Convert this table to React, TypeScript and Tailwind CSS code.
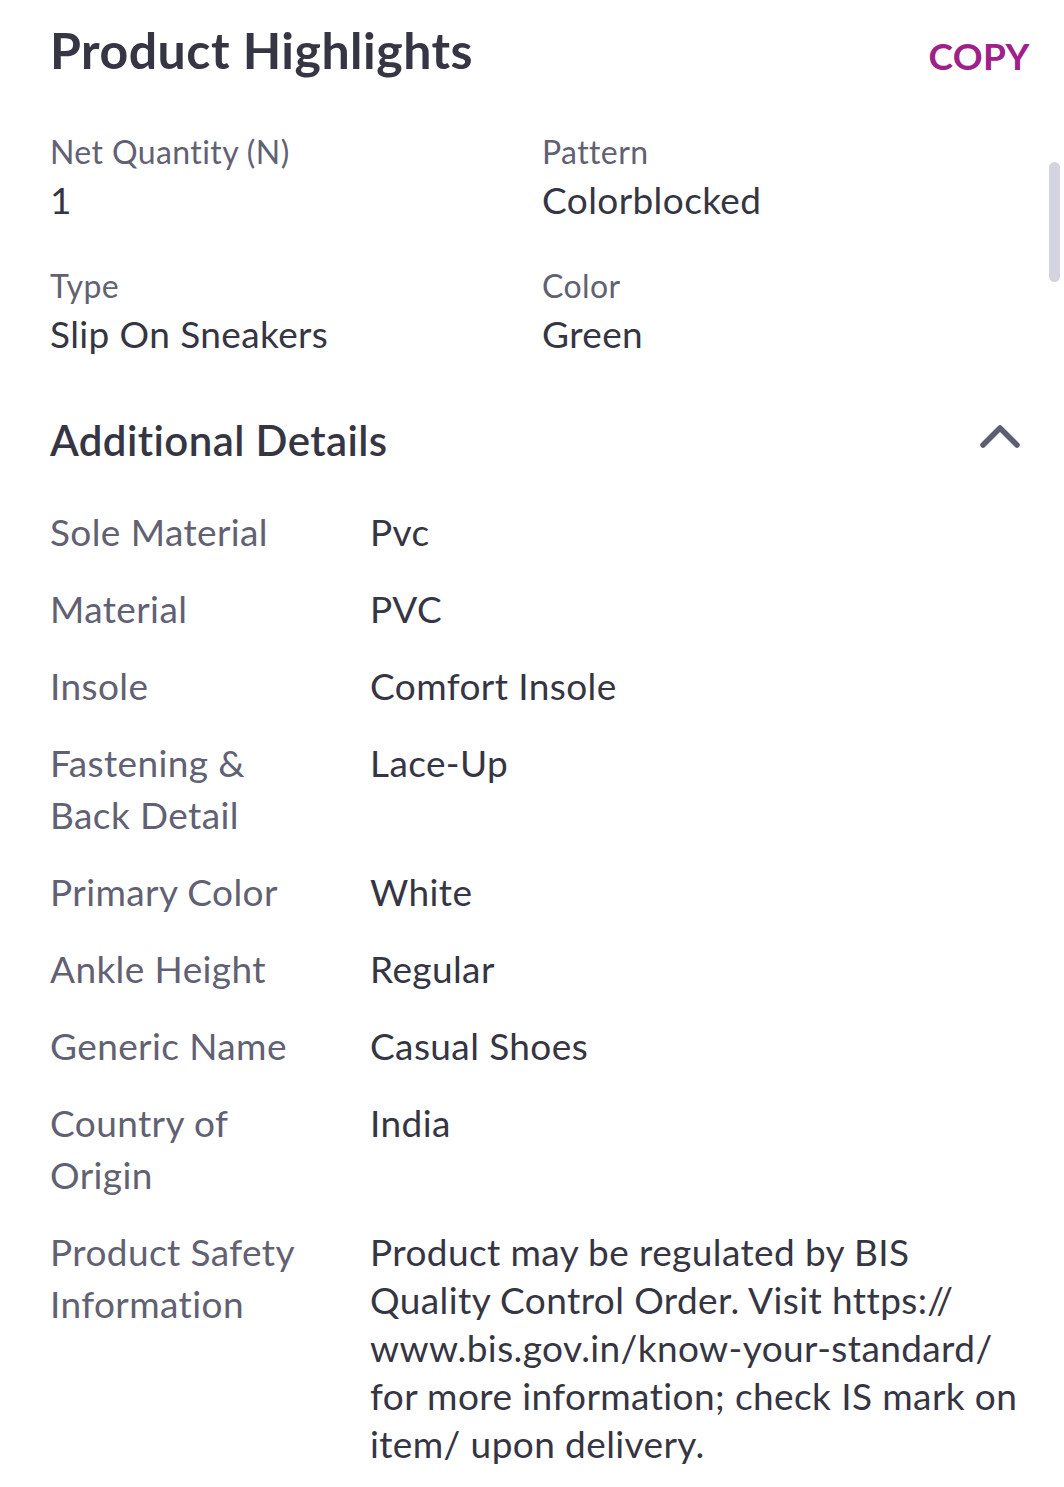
const highlights = [
  { label: "Net Quantity (N)", value: "1" },
  { label: "Pattern", value: "Colorblocked" },
  { label: "Type", value: "Slip On Sneakers" },
  { label: "Color", value: "Green" },
];

const details = [
  { label: "Sole Material", value: "Pvc" },
  { label: "Material", value: "PVC" },
  { label: "Insole", value: "Comfort Insole" },
  { label: "Fastening & Back Detail", value: "Lace-Up" },
  { label: "Primary Color", value: "White" },
  { label: "Ankle Height", value: "Regular" },
  { label: "Generic Name", value: "Casual Shoes" },
  { label: "Country of Origin", value: "India" },
  {
    label: "Product Safety Information",
    value:
      "Product may be regulated by BIS Quality Control Order. Visit https:// www.bis.gov.in/know-your-standard/ for more information; check IS mark on item/ upon delivery.",
  },
];

export default function App() {
  return (
    <div
      className="relative w-[1064px] h-[1487px] bg-white overflow-hidden text-[#353543] tracking-[0.025em]"
      style={{ fontFamily: "Lato, 'Open Sans', sans-serif" }}
    >
      <div className="pl-[50px] pr-[34px] pt-[20px]">
        <div className="flex items-start justify-between">
          <h1 className="text-[50px] leading-[60px] font-bold tracking-[0.01em]">Product Highlights</h1>
          <button className="mt-[14px] text-[37px] leading-[44px] font-bold text-[#9f2089]">
            COPY
          </button>
        </div>

        <div className="grid grid-cols-[492px_1fr] mt-[50px] gap-y-[38px]">
          {highlights.map((h) => (
            <div key={h.label} className="flex flex-col">
              <span className="text-[32px] leading-[44px] text-[#616173]">{h.label}</span>
              <span className="text-[37px] leading-[52px]">{h.value}</span>
            </div>
          ))}
        </div>

        <div className="flex items-center justify-between mt-[52px] pr-[10px]">
          <h2 className="text-[42px] leading-[56px] font-semibold">Additional Details</h2>
          <svg width="40" height="26" viewBox="0 0 40 26" fill="none" className="mt-[-8px]">
            <polyline
              points="3,22 20,5 37,22"
              stroke="#5d5e73"
              strokeWidth="5.5"
              strokeLinecap="round"
              strokeLinejoin="round"
            />
          </svg>
        </div>

        <div className="flex flex-col gap-y-[25px] mt-[38px]">
          {details.map((d) => (
            <div key={d.label} className="flex">
              <span className="w-[320px] shrink-0 pr-[44px] text-[37px] leading-[52px] text-[#616173]">
                {d.label}
              </span>
              <span className="flex-1 pt-[2px] pr-[6px] text-[37px] leading-[48px]">{d.value}</span>
            </div>
          ))}
        </div>
      </div>

      <div className="absolute right-[4px] top-[162px] w-[11px] h-[120px] rounded-full bg-[#d4d4e0]" />
    </div>
  );
}
